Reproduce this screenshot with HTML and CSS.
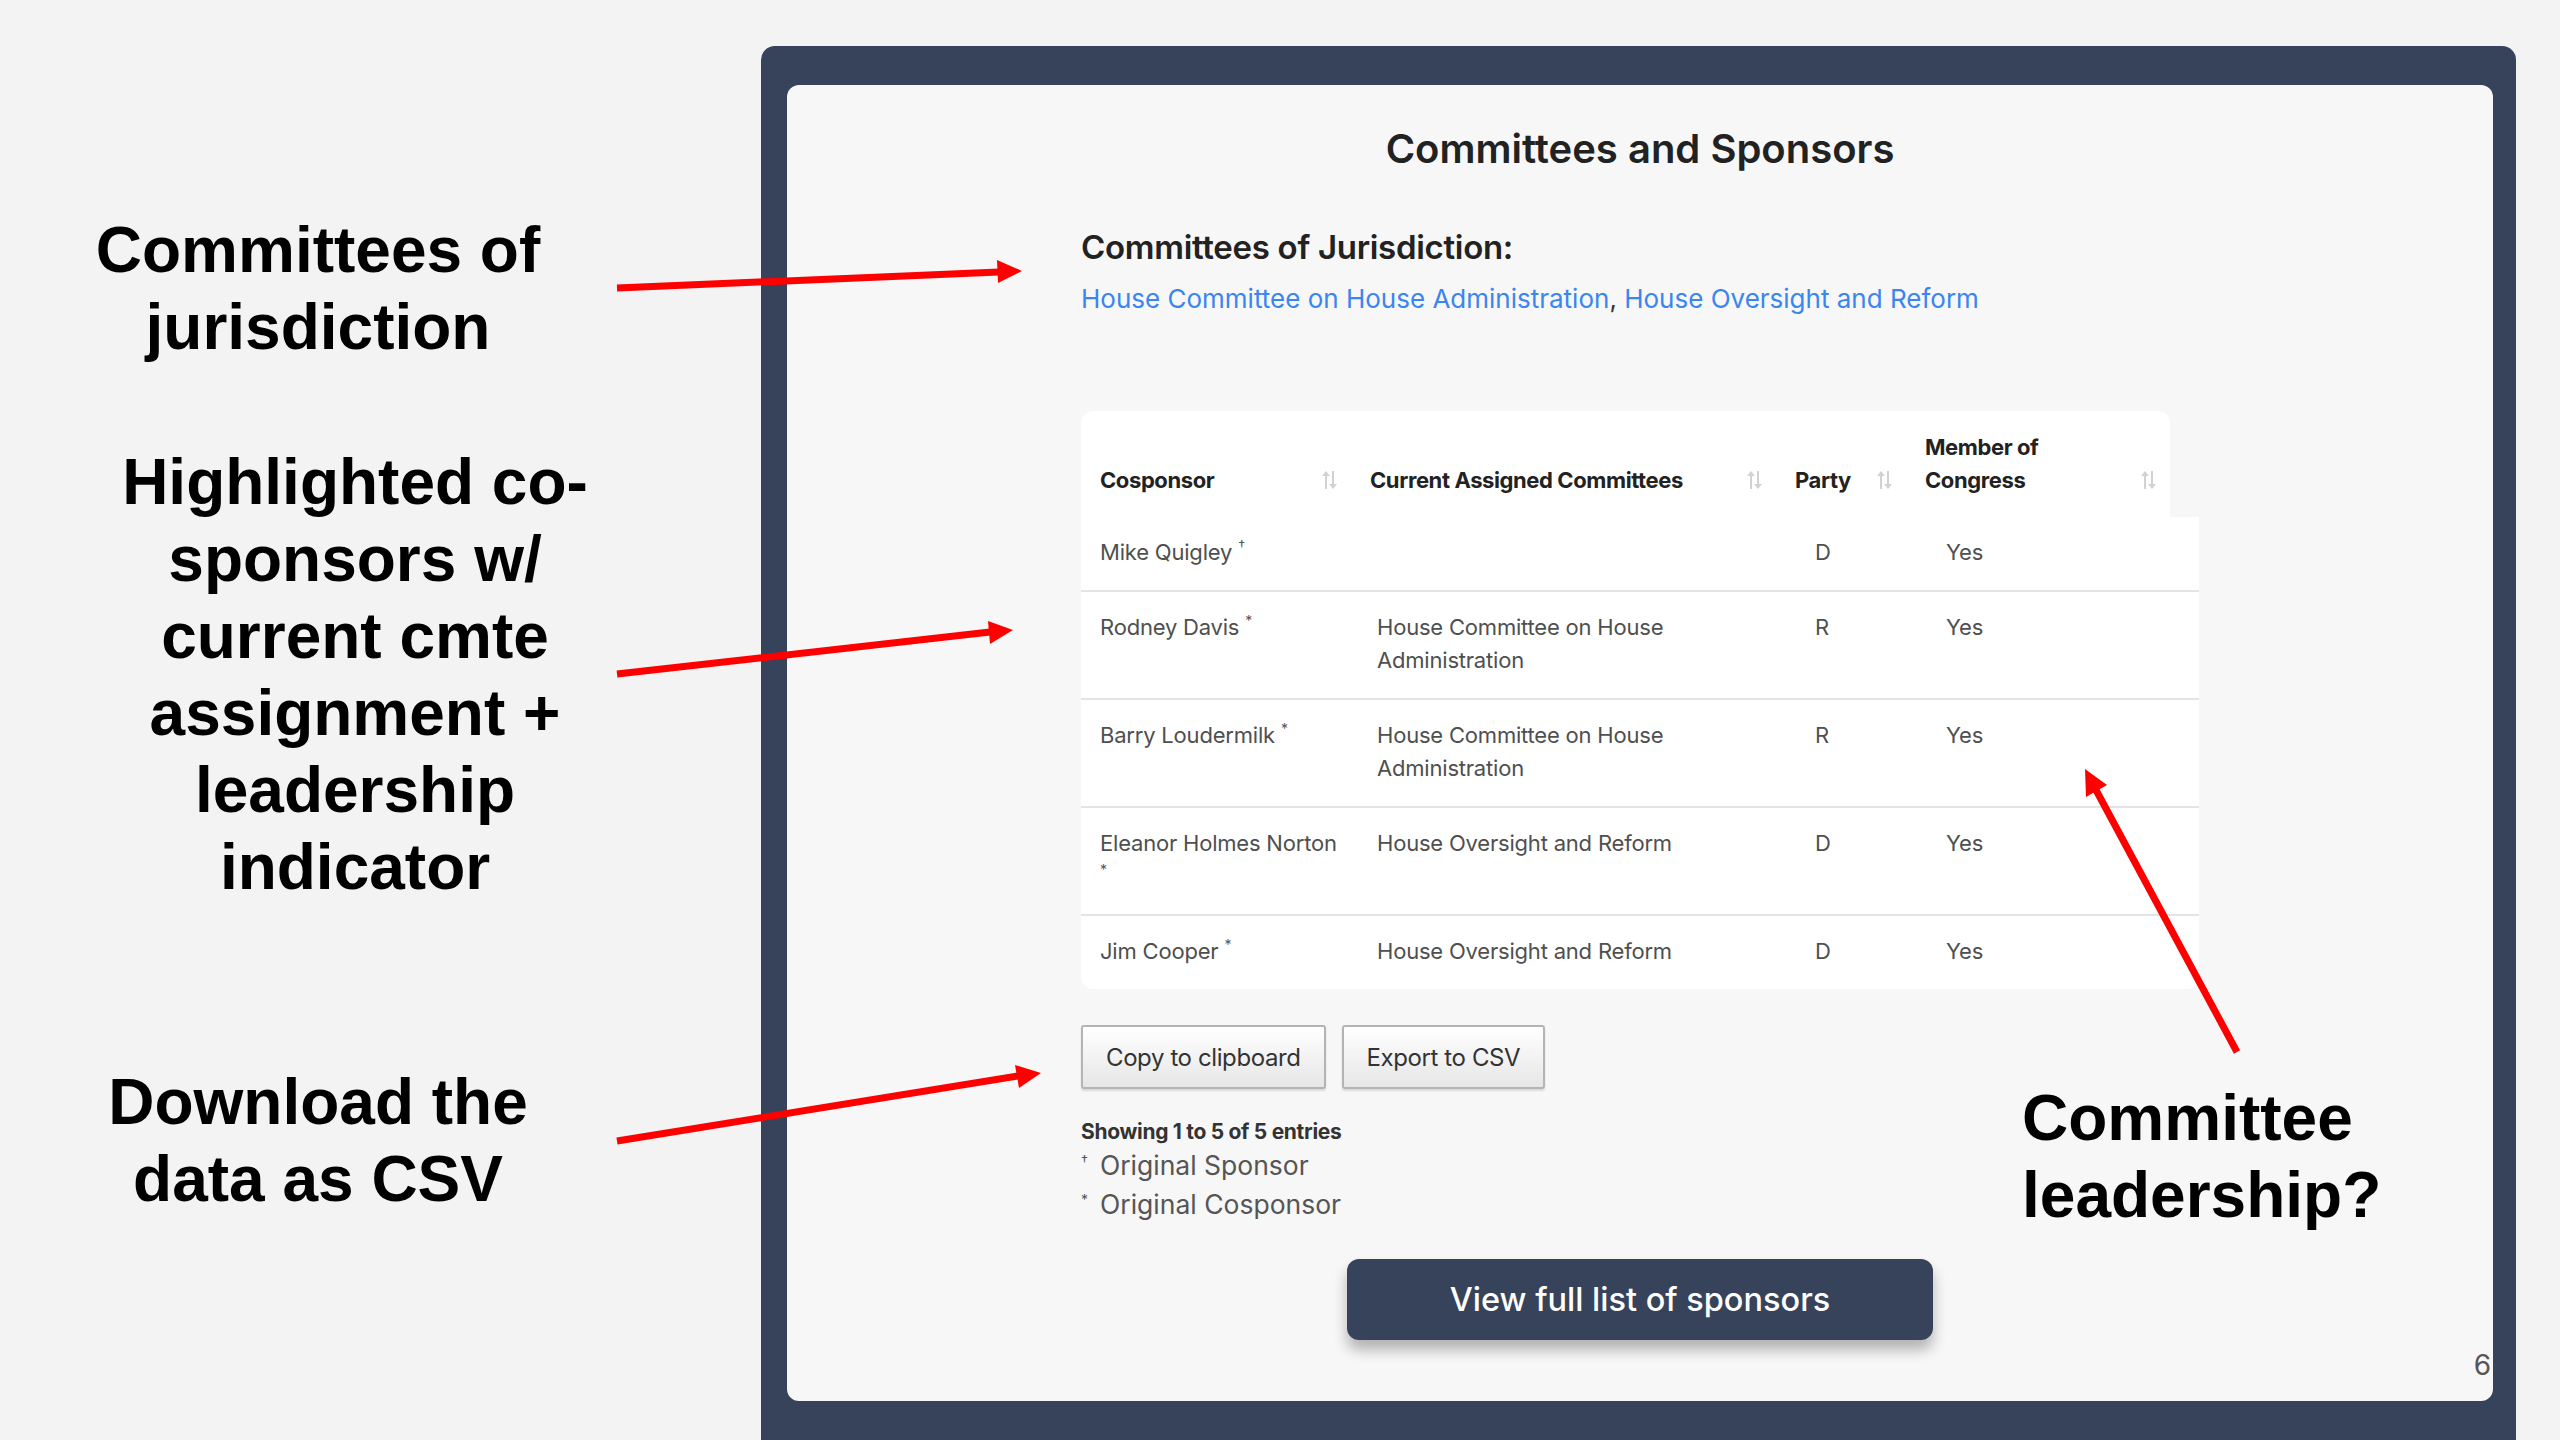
FILE: index.html
```html
<!DOCTYPE html>
<html>
<head>
    <title>Committees and Sponsors</title>
    <link rel="stylesheet" href="styles.css">
</head>
<body>
    <div class="notes">
        <p class="note">Committees of<br>jurisdiction</p>
        <p class="note note-wide">Highlighted co-<br>sponsors w/<br>current cmte<br>assignment +<br>leadership<br>indicator</p>
        <p class="note note-last">Download the<br>data as CSV</p>
    </div>

    <div class="frame">
        <div class="panel">
            <div class="content">
                <h2 class="title">Committees and Sponsors</h2>

                <h3 class="sub">Committees of Jurisdiction:</h3>
                <p class="links">
                    <a href="#">House Committee on House Administration</a>, <a href="#">House Oversight and Reform</a>
                </p>

                <div class="table">
                    <div class="thead">
                        <div class="th"><span>Cosponsor</span><i class="sort"></i></div>
                        <div class="th"><span>Current Assigned Committees</span><i class="sort"></i></div>
                        <div class="th"><span>Party</span><i class="sort"></i></div>
                        <div class="th"><span>Member of<br>Congress</span><i class="sort"></i></div>
                    </div>
                    <div class="tbody">
                        <div class="tr">
                            <div class="name"><span>Mike Quigley</span> <sup>†</sup></div>
                            <div></div>
                            <div>D</div>
                            <div>Yes</div>
                        </div>
                        <div class="tr">
                            <div class="name"><span>Rodney Davis</span> <sup>*</sup></div>
                            <div>House Committee on House Administration</div>
                            <div>R</div>
                            <div>Yes</div>
                        </div>
                        <div class="tr">
                            <div class="name"><span>Barry Loudermilk</span> <sup>*</sup></div>
                            <div>House Committee on House Administration</div>
                            <div>R</div>
                            <div>Yes</div>
                        </div>
                        <div class="tr">
                            <div class="name"><span>Eleanor Holmes Norton</span> <sup>*</sup></div>
                            <div>House Oversight and Reform</div>
                            <div>D</div>
                            <div>Yes</div>
                        </div>
                        <div class="tr">
                            <div class="name"><span>Jim Cooper</span> <sup>*</sup></div>
                            <div>House Oversight and Reform</div>
                            <div>D</div>
                            <div>Yes</div>
                        </div>
                    </div>
                </div>

                <div class="export">
                    <button class="btn-light">Copy to clipboard</button>
                    <button class="btn-light">Export to CSV</button>
                </div>

                <p class="info">Showing 1 to 5 of 5 entries</p>
                <ul class="legend">
                    <li><sup>†</sup>Original Sponsor</li>
                    <li><sup>*</sup>Original Cosponsor</li>
                </ul>

                <div class="more">
                    <button class="btn-dark">View full list of sponsors</button>
                </div>
            </div>
            <span class="page-num">6</span>
        </div>
    </div>

    <p class="callout">Committee<br>leadership?</p>

    <svg class="arrows" width="2560" height="1440" viewBox="0 0 2560 1440">
        <g stroke="#ff0000" stroke-width="7" stroke-linecap="butt" fill="none">
            <line x1="617" y1="288" x2="999" y2="272" />
            <line x1="617" y1="674" x2="990" y2="632" />
            <line x1="617" y1="1141" x2="1018" y2="1076" />
            <line x1="2237" y1="1052" x2="2096" y2="790" />
        </g>
        <g fill="#ff0000">
            <polygon points="1022,271 998,283 997,260" />
            <polygon points="1013,630 990,644 988,621" />
            <polygon points="1041,1073 1019,1088 1015,1065" />
            <polygon points="2085,769 2107,785 2086,797" />
        </g>
    </svg>
</body>
</html>
```

FILE: styles.css
```css
html, body {
    margin: 0;
    padding: 0;
}

body {
    width: 2560px;
    height: 1440px;
    overflow: hidden;
    background-color: #f3f3f3;
    display: flex;
    position: relative;
    font-family: Inter, 'Noto Sans', sans-serif;
}

/* slide annotations */
.notes {
    width: 761px;
    flex-shrink: 0;
    padding-top: 212px;
    box-sizing: border-box;
}

.note {
    width: 636px;
    margin: 0;
    font-family: 'Liberation Sans', Arial, sans-serif;
    font-weight: bold;
    font-size: 64px;
    line-height: 77px;
    color: #000;
    text-align: center;
}

.note-wide {
    margin-top: 78px;
    padding-left: 37px;
}

.note-last {
    margin-top: 158px;
}

.callout {
    position: absolute;
    left: 2022px;
    top: 1080px;
    margin: 0;
    font-family: 'Liberation Sans', Arial, sans-serif;
    font-weight: bold;
    font-size: 64px;
    line-height: 77px;
    color: #000;
}

.arrows {
    position: absolute;
    left: 0;
    top: 0;
    pointer-events: none;
}

/* dark frame + panel */
.frame {
    flex: 1;
    margin: 46px 44px 0 0;
    height: 1394px;
    padding: 39px 23px 39px 26px;
    box-sizing: border-box;
    background-color: #36435a;
    border-radius: 14px 14px 0 0;
    display: flex;
}

.panel {
    flex: 1;
    background-color: #f7f7f7;
    border-radius: 12px;
    position: relative;
    overflow: hidden;
    padding-top: 41px;
}

.page-num {
    position: absolute;
    right: 2px;
    top: 1263px;
    font-size: 28px;
    line-height: 34px;
    color: #555;
}

.content {
    width: 1118px;
    margin: 0 auto;
}

.title {
    margin: 0;
    text-align: center;
    font-size: 40px;
    line-height: 46px;
    font-weight: 600;
    color: #222;
}

.sub {
    margin: 55px 0 0;
    font-size: 33px;
    line-height: 40px;
    font-weight: 600;
    color: #222;
    letter-spacing: -0.3px;
}

.links {
    margin: 15px 0 0;
    font-size: 26px;
    line-height: 34px;
    color: #333;
}

.links a {
    color: #3a86f0;
    text-decoration: none;
}

/* table */
.table {
    margin-top: 95px;
    font-size: 22px;
    line-height: 33px;
}

.thead {
    width: 1089px;
    display: grid;
    grid-template-columns: 270px 425px 130px 264px;
    background-color: #fff;
    border-radius: 12px 12px 0 0;
}

.th {
    display: flex;
    align-items: flex-end;
    justify-content: space-between;
    padding: 20px 14px 20px 19px;
    font-weight: 700;
    color: #222;
    letter-spacing: -0.4px;
}

.sort {
    width: 16px;
    height: 18px;
    margin-bottom: 8px;
    background:
        linear-gradient(#d2d2d2, #d2d2d2) 4px 2px / 2px 16px no-repeat,
        linear-gradient(#d2d2d2, #d2d2d2) 11px 0 / 2px 16px no-repeat;
    position: relative;
}

.sort::before,
.sort::after {
    content: '';
    position: absolute;
    width: 0;
    height: 0;
    border-left: 4px solid transparent;
    border-right: 4px solid transparent;
}

.sort::before {
    left: 1px;
    top: 0;
    border-bottom: 5px solid #d2d2d2;
}

.sort::after {
    left: 8px;
    bottom: 0;
    border-top: 5px solid #d2d2d2;
}

.tbody {
    width: 1118px;
    background-color: #fff;
    border-radius: 0 0 12px 12px;
}

.tr {
    display: grid;
    grid-template-columns: 277px 438px 131px 272px;
    border-bottom: 2px solid #e4e4e4;
    color: #4f4f4f;
    letter-spacing: -0.2px;
}

.tr:last-child {
    border-bottom: none;
}

.tr > div {
    padding: 19px 19px 21px;
}

.tr > .name {
    padding-right: 40px;
}

.name span {
    white-space: nowrap;
}

sup {
    font-size: 14px;
    line-height: 0;
    vertical-align: 9px;
    color: #555;
}

/* export buttons */
.export {
    margin-top: 36px;
    display: flex;
    gap: 16px;
}

.btn-light {
    height: 64px;
    padding: 0 23px;
    font-family: inherit;
    font-size: 24px;
    color: #333;
    letter-spacing: -0.4px;
    background: linear-gradient(#ffffff, #e6e6e6);
    border: 2px solid #b4b4b4;
    border-radius: 3px;
    box-shadow: 0 2px 2px rgba(0, 0, 0, 0.12);
    cursor: pointer;
}

.info {
    margin: 29px 0 0;
    font-size: 21px;
    line-height: 28px;
    font-weight: 700;
    color: #333;
    letter-spacing: -0.3px;
}

.legend {
    list-style: none;
    margin: 0;
    padding: 0;
    font-size: 26.5px;
    line-height: 39px;
    color: #555;
}

.legend sup {
    font-size: 14px;
    margin-right: 12px;
}

.more {
    margin-top: 35px;
    display: flex;
    justify-content: center;
}

.btn-dark {
    width: 586px;
    height: 81px;
    font-family: inherit;
    font-size: 32.5px;
    font-weight: 500;
    color: #fff;
    background-color: #36435a;
    border: none;
    border-radius: 12px;
    box-shadow: 0 10px 14px rgba(0, 0, 0, 0.28);
    cursor: pointer;
}
```
